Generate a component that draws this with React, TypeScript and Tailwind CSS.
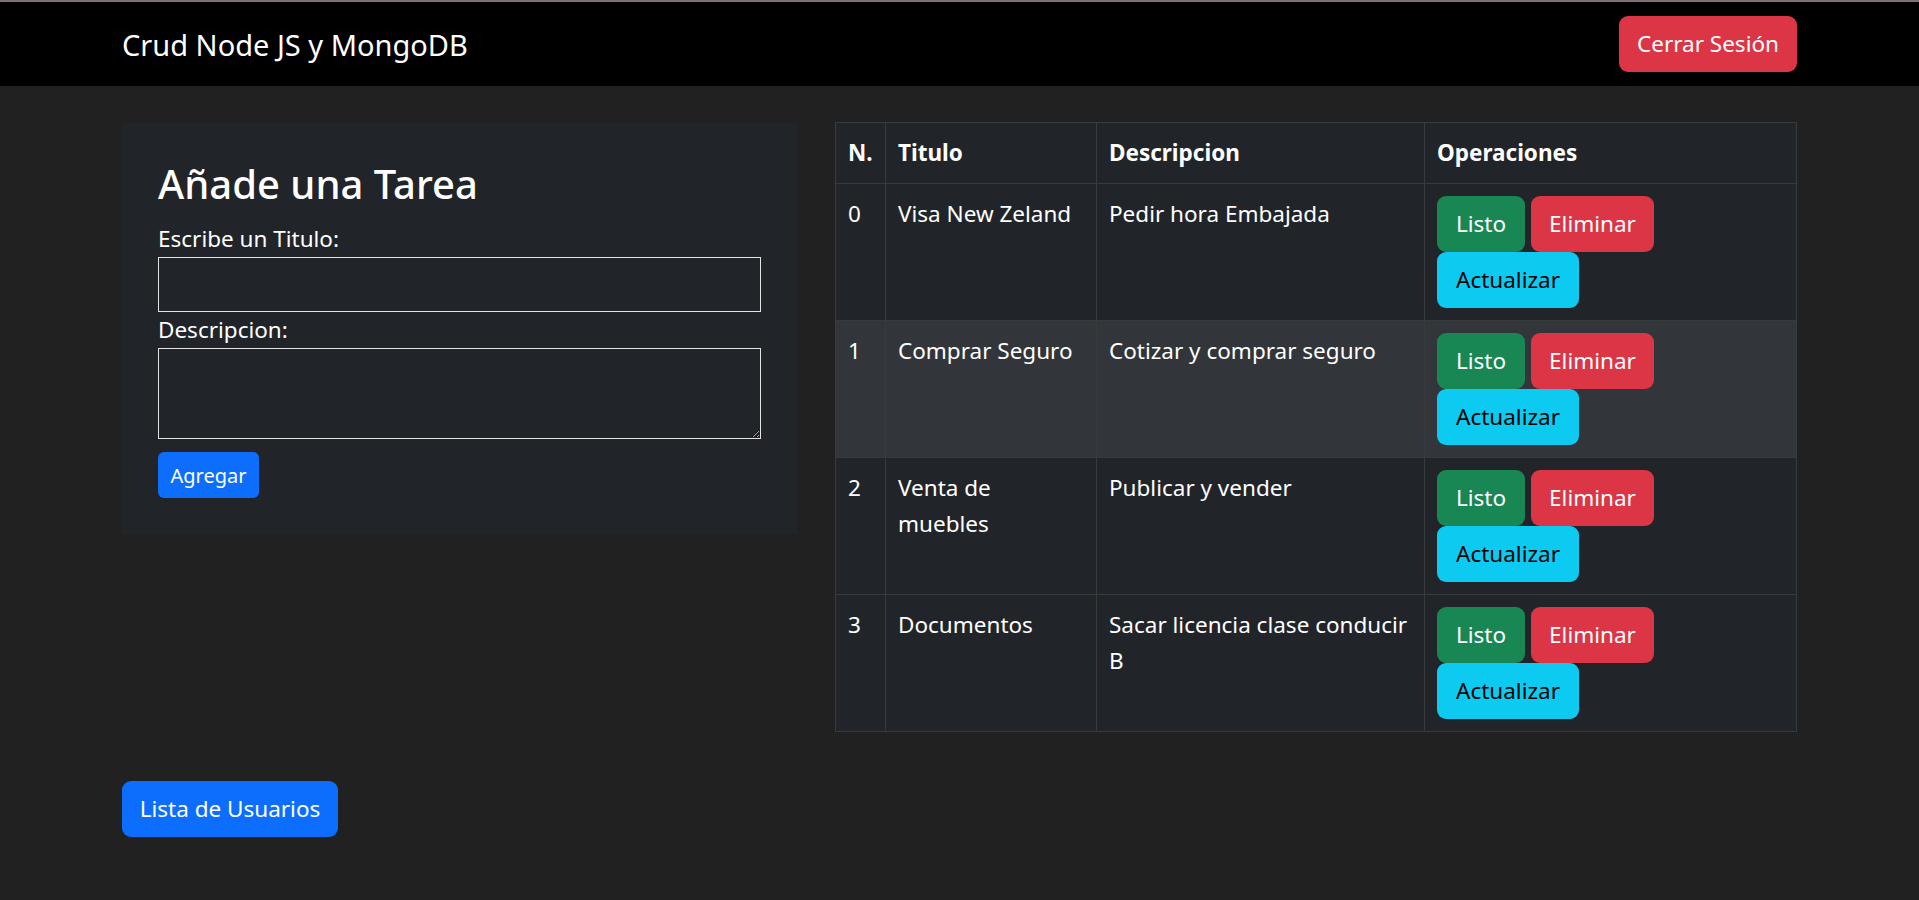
const tareas = [
  { id: 0, titulo: "Visa New Zeland", descripcion: "Pedir hora Embajada" },
  { id: 1, titulo: "Comprar Seguro", descripcion: "Cotizar y comprar seguro" },
  { id: 2, titulo: "Venta de muebles", descripcion: "Publicar y vender" },
  { id: 3, titulo: "Documentos", descripcion: "Sacar licencia clase conducir B" },
];

const Navbar = () => {
  return (
    <nav className="bg-black h-[84px]">
      <div className="mx-[122px] h-full flex items-center justify-between">
        <span className="text-[29px] leading-[45px] text-white">Crud Node JS y MongoDB</span>
        <button className="h-[56px] w-[178px] rounded-[9px] bg-[#dc3545] text-white">
          Cerrar Sesión
        </button>
      </div>
    </nav>
  );
};

const TaskForm = () => {
  return (
    <div className="w-[676px] mt-[1px] bg-[#212529] p-[36px] self-start">
      <h3 className="text-[40px] leading-[50px] font-medium mb-[12px]">Añade una Tarea</h3>
      <form>
        <label className="block">Escribe un Titulo:</label>
        <input type="text" className="block w-full h-[55px] border border-[#e3e3e3] bg-transparent outline-none" />
        <label className="block">Descripcion:</label>
        <textarea className="block w-full h-[91px] border border-[#e3e3e3] bg-transparent outline-none"></textarea>
        <button
          type="button"
          className="mt-[13px] h-[46px] w-[101px] rounded-[6px] bg-[#0d6efd] text-[20px] leading-[31px] text-white"
        >
          Agregar
        </button>
      </form>
    </div>
  );
};

const Operaciones = () => {
  return (
    <div className="flex flex-wrap gap-x-[6px]">
      <button className="h-[56px] w-[88px] rounded-[9px] bg-[#198754] text-white">Listo</button>
      <button className="h-[56px] w-[123px] rounded-[9px] bg-[#dc3545] text-white">Eliminar</button>
      <button className="h-[56px] w-[142px] rounded-[9px] bg-[#0dcaf0] text-black">Actualizar</button>
    </div>
  );
};

const TaskTable = () => {
  const cell = "p-3 border border-[#373b3e] align-top text-left";
  return (
    <table className="w-[961px] table-fixed border-collapse border border-[#373b3e] bg-[#212529] self-start">
      <colgroup>
        <col className="w-[50px]" />
        <col className="w-[211px]" />
        <col className="w-[328px]" />
        <col className="w-[372px]" />
      </colgroup>
      <thead>
        <tr>
          <th className={cell + " font-bold"}>N.</th>
          <th className={cell + " font-bold"}>Titulo</th>
          <th className={cell + " font-bold"}>Descripcion</th>
          <th className={cell + " font-bold"}>Operaciones</th>
        </tr>
      </thead>
      <tbody>
        {tareas.map((t) => (
          <tr key={t.id} className={t.id === 1 ? "bg-[#323539]" : ""}>
            <td className={cell}>{t.id}</td>
            <td className={cell}>{t.titulo}</td>
            <td className={cell}>{t.descripcion}</td>
            <td className={cell}>
              <Operaciones />
            </td>
          </tr>
        ))}
      </tbody>
    </table>
  );
};

export default function App() {
  return (
    <div className="min-h-screen bg-[#212121] text-white font-['Noto_Sans',sans-serif] text-[22.5px] leading-[36px]">
      <div className="h-[2px] bg-[#7d7276]"></div>
      <Navbar />
      <main className="mx-[122px]">
        <div className="flex gap-[38px] pt-[36px]">
          <TaskForm />
          <TaskTable />
        </div>
        <button className="mt-[49px] h-[56px] w-[216px] rounded-[9px] bg-[#0d6efd] text-white">
          Lista de Usuarios
        </button>
      </main>
    </div>
  );
}
